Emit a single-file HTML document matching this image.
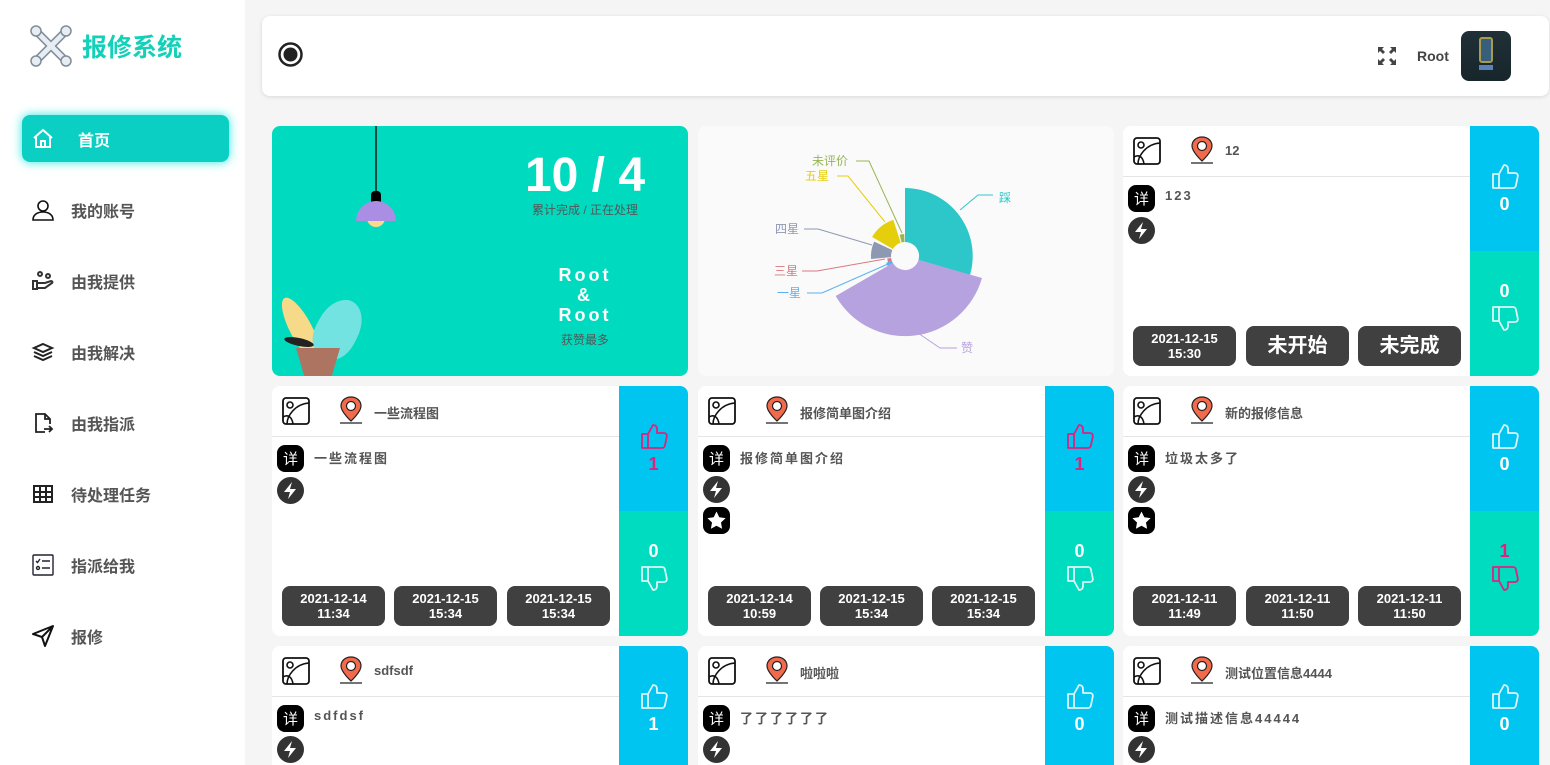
<!DOCTYPE html>
<html><head><meta charset="utf-8"><style>
*{margin:0;padding:0;box-sizing:border-box}
html{width:1550px;height:765px;overflow:hidden}
body{width:1550px;height:765px;overflow:hidden;background:#f5f5f5;font-family:"Liberation Sans","Noto Sans CJK SC",sans-serif;position:relative}
.side{position:absolute;left:0;top:0;width:245px;height:765px;background:#fff}
.logo{position:absolute;left:30px;top:25px;display:flex;align-items:center}
.logo span{font-size:25px;font-weight:bold;color:#13d1b8;margin-left:10px}
.nav{position:absolute;left:22px;width:207px;height:47px;display:flex;align-items:center;font-size:16px;font-weight:bold;color:#555}
.nav svg{position:absolute;left:9px}
.nav span{position:absolute;left:49px}
.nav.act{background:#0ccfc3;border-radius:8px;box-shadow:0 0 10px #2ee8e0;color:#fff}
.nav.act span{left:56px}
.head{position:absolute;left:262px;top:16px;width:1287px;height:80px;background:#fff;border-radius:8px;box-shadow:0 1px 4px rgba(0,0,0,.12)}
.card{position:absolute;width:416px;height:250px;background:#fff;border-radius:8px;overflow:hidden}
.card.r3{height:119px;border-radius:8px 8px 0 0}
.card .hd{position:absolute;left:0;top:0;width:347px;height:51px;border-bottom:1px solid #e5e5e5}
.card .img{position:absolute;left:10px;top:11px}
.card .pin{position:absolute;left:67px;top:10px}
.card .ttl{position:absolute;left:102px;top:17px;font-size:13px;font-weight:bold;color:#555}
.b{position:absolute;left:5px;width:27px;height:27px}
.desc{position:absolute;left:42px;top:62px;font-size:13px;font-weight:bold;color:#555;letter-spacing:2px}
.btn{position:absolute;top:200px;width:103px;height:40px;background:#404040;border-radius:8px;color:#fff;font-size:13px;font-weight:bold;text-align:center;line-height:15px;padding-top:5px}
.btn.big{font-size:20px;line-height:30px}
.up{position:absolute;left:347px;top:0;width:69px;height:125px;background:#00c5f0}
.dn{position:absolute;left:347px;top:125px;width:69px;height:125px;background:#00dcc0}
.num{position:absolute;left:0;width:69px;text-align:center;font-size:18px;font-weight:bold;color:#fff}
.up svg{position:absolute;left:20px;top:35px}
.up .num{top:68px}
.dn .num{top:30px}
.dn svg{position:absolute;left:20px;top:53px}
.pk{color:#e0217e!important}
</style></head><body>
<div class="side">
 <div class="logo">
  <svg width="42" height="42" viewBox="0 0 42 42" fill="none" stroke-linecap="round"><g stroke="#7f8c99" stroke-width="8"><path d="M8 8l26 26M34 8L8 34"/></g><g stroke="#e8edf3" stroke-width="5"><path d="M8 8l26 26M34 8L8 34"/></g><g fill="#e8edf3" stroke="#7f8c99" stroke-width="1.5"><circle cx="6" cy="6" r="5"/><circle cx="36" cy="6" r="5"/><circle cx="6" cy="36" r="5"/><circle cx="36" cy="36" r="5"/></g></svg>
  <span>报修系统</span>
 </div>
 <div class="nav act" style="top:115px"><svg width="24" height="24" viewBox="0 0 24 24" fill="none" stroke="#fff" stroke-width="2"><path d="M3 11L12 3l9 8M5 9v11h14V9M10 20v-6h4v6"/></svg><span>首页</span></div>
 <div class="nav" style="top:186px"><svg width="24" height="24" viewBox="0 0 24 24" fill="none" stroke="#111" stroke-width="1.6"><circle cx="12" cy="8" r="5"/><path d="M2 22c0-5 4-8 10-8s10 3 10 8z"/></svg><span>我的账号</span></div>
 <div class="nav" style="top:257px"><svg width="24" height="24" viewBox="0 0 24 24" fill="none" stroke="#333" stroke-width="2"><circle cx="9" cy="5" r="2"/><circle cx="17" cy="7" r="2"/><path d="M2 12h4v8H2zM6 14h8l6-2c1 0 2 1 1 2l-7 5H6"/></svg><span>由我提供</span></div>
 <div class="nav" style="top:328px"><svg width="24" height="24" viewBox="0 0 24 24" fill="none" stroke="#222" stroke-width="2"><path d="M12 4l9 4-9 4-9-4zM3 12l9 4 9-4M3 16l9 4 9-4"/></svg><span>由我解决</span></div>
 <div class="nav" style="top:399px"><svg width="24" height="24" viewBox="0 0 24 24" fill="none" stroke="#222" stroke-width="1.8"><path d="M14 21H5V3h9l5 5v5M14 3v5h5M13 18h8M18 15l3 3-3 3"/></svg><span>由我指派</span></div>
 <div class="nav" style="top:470px"><svg width="24" height="24" viewBox="0 0 24 24" fill="none" stroke="#222" stroke-width="2"><rect x="3" y="4" width="18" height="16"/><path d="M9 4v16M15 4v16M3 10h18M3 15h18"/></svg><span>待处理任务</span></div>
 <div class="nav" style="top:541px"><svg width="24" height="24" viewBox="0 0 24 24" fill="none" stroke="#223" stroke-width="1.4"><rect x="2" y="2" width="20" height="20" rx="1"/><path d="M5 8l1.5 1.5L9 6M11 8h8M11 15h8"/><circle cx="7" cy="15" r="1.5"/></svg><span>指派给我</span></div>
 <div class="nav" style="top:612px"><svg width="24" height="24" viewBox="0 0 24 24" fill="none" stroke="#111" stroke-width="2" stroke-linejoin="round"><path d="M22 2L2 10l9 3 3 9z M11 13l11-11"/></svg><span>报修</span></div>
</div>

<div class="head">
 <svg style="position:absolute;left:16px;top:26px" width="25" height="25" viewBox="0 0 25 25"><circle cx="12.5" cy="12.5" r="11" fill="none" stroke="#222" stroke-width="2.5"/><circle cx="12.5" cy="12.5" r="7" fill="#222"/></svg>
 <svg style="position:absolute;left:1116px;top:31px" width="18" height="18" viewBox="0 0 18 18" fill="#444"><path d="M0 0h6L4 2l3 3-2 2-3-3-2 2zM18 0v6l-2-2-3 3-2-2 3-3-2-2zM0 18v-6l2 2 3-3 2 2-3 3 2 2zM18 18h-6l2-2-3-3 2-2 3 3 2-2z"/></svg>
 <div style="position:absolute;left:1155px;top:32px;font-size:14px;font-weight:bold;color:#444">Root</div>
 <div style="position:absolute;left:1199px;top:15px;width:50px;height:50px;border-radius:8px;background:linear-gradient(180deg,#203036,#16262b);overflow:hidden"><div style="position:absolute;left:18px;top:6px;width:14px;height:26px;border:2px solid #a89a4e;border-radius:3px;background:#385f7a"></div><div style="position:absolute;left:18px;top:34px;width:14px;height:5px;background:#5a82b8"></div></div>
</div>

<div class="card" style="left:272px;top:126px;background:#00dbbf">
 <div style="position:absolute;left:103px;top:0;width:2px;height:66px;background:#1a4a40"></div>
 <div style="position:absolute;left:99px;top:65px;width:10px;height:12px;background:#000;border-radius:4px 4px 0 0"></div>
 <div style="position:absolute;left:95px;top:92px;width:18px;height:9px;background:#f9d88a;border-radius:0 0 9px 9px"></div>
 <div style="position:absolute;left:84px;top:75px;width:40px;height:20px;background:#a98ee4;border-radius:20px 20px 0 0"></div>
 <div style="position:absolute;left:18px;top:168px;width:22px;height:70px;background:#f7d98a;border-radius:50%;transform:rotate(-28deg)"></div>
 <div style="position:absolute;left:45px;top:172px;width:42px;height:62px;background:#72e3e0;border-radius:50% 50% 40% 40%;transform:rotate(28deg)"></div>
 <div style="position:absolute;left:12px;top:212px;width:30px;height:8px;background:#222;border-radius:50%;transform:rotate(12deg)"></div>
 <div style="position:absolute;left:24px;top:222px;width:44px;height:30px;background:#ad7462;clip-path:polygon(0 0,100% 0,80% 100%,20% 100%)"></div>
 <div style="position:absolute;left:230px;top:22px;width:166px;text-align:center;color:#fff;font-size:48px;font-weight:bold">10 / 4</div>
 <div style="position:absolute;left:230px;top:75px;width:166px;text-align:center;color:#555;font-size:12px">累计完成 / 正在处理</div>
 <div style="position:absolute;left:230px;top:139px;width:166px;text-align:center;color:#fff;font-size:18px;font-weight:bold;letter-spacing:3px;line-height:20px">Root<br>&amp;<br>Root</div>
 <div style="position:absolute;left:230px;top:205px;width:166px;text-align:center;color:#555;font-size:12px">获赞最多</div>
</div>

<div class="card" style="left:698px;top:126px;background:#fafafa">
<svg width="416" height="250" viewBox="698 126 416 250" style="position:absolute;left:0;top:0" font-family="Liberation Sans,Noto Sans CJK SC,sans-serif" font-size="12">
 <path d="M905,188 A68,68 0 0 1 970,275 L918.5,260 A14,14 0 0 0 905,242 Z" fill="#2ec7c9"/>
 <path d="M982,278 A80,80 0 0 1 835.7,296 L892.9,263 A14,14 0 0 0 918.5,260 Z" fill="#b6a2de"/>
 <path d="M892.9,263 L887.7,266 A20,20 0 0 1 886.2,262.8 L891.8,260.8 Z" fill="#5ab1ef"/>
 <path d="M891.8,260.8 L888.1,262.2 A18,18 0 0 1 887.2,258.5 L891.1,258 Z" fill="#d87a80"/>
 <path d="M871.1,259 A34,34 0 0 1 874.2,241.6 L892.3,250.1 A14,14 0 0 0 891.1,257.2 Z" fill="#8d98b3"/>
 <path d="M872.1,237 A38,38 0 0 1 893.3,219.9 L900.7,242.7 A14,14 0 0 0 892.9,249 Z" fill="#e5cf0d"/>
 <path d="M899.7,234.7 A22,22 0 0 1 904.2,234 L904.5,242 A14,14 0 0 0 901.6,242.4 Z" fill="#97b552"/>
 <g fill="none" stroke-width="1">
  <polyline points="960,210 978,195 993,195" stroke="#2ec7c9"/>
  <polyline points="915,331 940,348 957,348" stroke="#b6a2de"/>
  <polyline points="888,264 822,293 807,293" stroke="#5ab1ef"/>
  <polyline points="885,259 817,271 802,271" stroke="#d87a80"/>
  <polyline points="872,245 818,229 804,229" stroke="#8d98b3"/>
  <polyline points="885,222 848,176 837,176" stroke="#e5cf0d"/>
  <polyline points="902,233 869,161 856,161" stroke="#97b552"/>
 </g>
 <text x="999" y="202" fill="#2ec7c9">踩</text>
 <text x="961" y="352" fill="#b6a2de">赞</text>
 <text x="777" y="297" fill="#5ab1ef">一星</text>
 <text x="774" y="275" fill="#d87a80">三星</text>
 <text x="775" y="233" fill="#8d98b3">四星</text>
 <text x="805" y="180" fill="#e5cf0d">五星</text>
 <text x="812" y="165" fill="#97b552">未评价</text>
</svg>
</div>

<svg width="0" height="0" style="position:absolute">
 <defs>
  <symbol id="img" viewBox="0 0 28 28"><rect x="1" y="1" width="26" height="26" rx="3" fill="none" stroke="#111" stroke-width="1.8"/><circle cx="8" cy="8" r="3" fill="none" stroke="#111" stroke-width="1.6"/><path d="M1 20c5-3 9 0 10 7M5 27c0-8 8-20 22-21" fill="none" stroke="#111" stroke-width="1.6"/></symbol>
  <symbol id="pin" viewBox="0 0 24 28"><path d="M12 1C6 1 2 5 2 10c0 6 10 15 10 15s10-9 10-15C22 5 18 1 12 1z" fill="#f26a4b" stroke="#222" stroke-width="1.2"/><circle cx="12" cy="10" r="4.5" fill="#fff" stroke="#222" stroke-width="1.2"/><path d="M1 27h22" stroke="#222" stroke-width="1.2"/></symbol>
  <symbol id="xiang" viewBox="0 0 27 27"><rect width="27" height="27" rx="8" fill="#000"/><text x="13.5" y="19" text-anchor="middle" fill="#fff" font-size="15" font-family="Noto Sans CJK SC,sans-serif">详</text></symbol>
  <symbol id="bolt" viewBox="0 0 27 27"><circle cx="13.5" cy="13.5" r="13.5" fill="#333"/><path d="M15 5L7 15h6l-2 7 8-10h-6z" fill="#fff"/></symbol>
  <symbol id="star" viewBox="0 0 27 27"><rect width="27" height="27" rx="8" fill="#000"/><path d="M13.5 4.5l2.8 5.8 6.3.8-4.6 4.4 1.1 6.3-5.6-3-5.6 3 1.1-6.3-4.6-4.4 6.3-.8z" fill="#fff"/></symbol>
  <symbol id="tup" viewBox="0 0 30 30"><path d="M9 13v14H3V13zM9 13l5-9c2.5 0 4 1.5 4 4v4h7c2 0 3.2 1.6 2.8 3.4l-2 9.5C25.5 26 24.3 27 23 27H9" fill="none" stroke="currentColor" stroke-width="1.8" stroke-linejoin="round"/></symbol>
  <symbol id="tdn" viewBox="0 0 30 30"><path d="M9 17V3H3v14zM9 17l5 9c2.5 0 4-1.5 4-4v-4h7c2 0 3.2-1.6 2.8-3.4l-2-9.5C25.5 4 24.3 3 23 3H9" fill="none" stroke="currentColor" stroke-width="1.8" stroke-linejoin="round"/></symbol>
 </defs>
</svg>

<div class="card" style="left:1123px;top:126px">
 <div class="hd"><svg class="img" width="28" height="28"><use href="#img"/></svg><svg class="pin" width="24" height="28"><use href="#pin"/></svg><div class="ttl">12</div></div>
 <svg class="b" style="top:59px"><use href="#xiang"/></svg><svg class="b" style="top:91px"><use href="#bolt"/></svg>
 <div class="desc">123</div>
 <div class="btn" style="left:10px">2021-12-15<br>15:30</div>
 <div class="btn big" style="left:123px">未开始</div>
 <div class="btn big" style="left:235px">未完成</div>
 <div class="up"><svg width="30" height="30" style="color:#e0f4f8"><use href="#tup"/></svg><div class="num">0</div></div>
 <div class="dn"><div class="num">0</div><svg width="30" height="30" style="color:#e0f4f4"><use href="#tdn"/></svg></div>
</div>

<div class="card" style="left:272px;top:386px">
 <div class="hd"><svg class="img" width="28" height="28"><use href="#img"/></svg><svg class="pin" width="24" height="28"><use href="#pin"/></svg><div class="ttl">一些流程图</div></div>
 <svg class="b" style="top:59px"><use href="#xiang"/></svg><svg class="b" style="top:91px"><use href="#bolt"/></svg>
 <div class="desc">一些流程图</div>
 <div class="btn" style="left:10px">2021-12-14<br>11:34</div>
 <div class="btn" style="left:122px">2021-12-15<br>15:34</div>
 <div class="btn" style="left:235px">2021-12-15<br>15:34</div>
 <div class="up"><svg width="30" height="30" style="color:#e0217e"><use href="#tup"/></svg><div class="num pk">1</div></div>
 <div class="dn"><div class="num">0</div><svg width="30" height="30" style="color:#e0f4f4"><use href="#tdn"/></svg></div>
</div>
<div class="card" style="left:698px;top:386px">
 <div class="hd"><svg class="img" width="28" height="28"><use href="#img"/></svg><svg class="pin" width="24" height="28"><use href="#pin"/></svg><div class="ttl">报修简单图介绍</div></div>
 <svg class="b" style="top:59px"><use href="#xiang"/></svg><svg class="b" style="top:90px"><use href="#bolt"/></svg><svg class="b" style="top:121px"><use href="#star"/></svg>
 <div class="desc">报修简单图介绍</div>
 <div class="btn" style="left:10px">2021-12-14<br>10:59</div>
 <div class="btn" style="left:122px">2021-12-15<br>15:34</div>
 <div class="btn" style="left:234px">2021-12-15<br>15:34</div>
 <div class="up"><svg width="30" height="30" style="color:#e0217e"><use href="#tup"/></svg><div class="num pk">1</div></div>
 <div class="dn"><div class="num">0</div><svg width="30" height="30" style="color:#e0f4f4"><use href="#tdn"/></svg></div>
</div>
<div class="card" style="left:1123px;top:386px">
 <div class="hd"><svg class="img" width="28" height="28"><use href="#img"/></svg><svg class="pin" width="24" height="28"><use href="#pin"/></svg><div class="ttl">新的报修信息</div></div>
 <svg class="b" style="top:59px"><use href="#xiang"/></svg><svg class="b" style="top:90px"><use href="#bolt"/></svg><svg class="b" style="top:121px"><use href="#star"/></svg>
 <div class="desc">垃圾太多了</div>
 <div class="btn" style="left:10px">2021-12-11<br>11:49</div>
 <div class="btn" style="left:123px">2021-12-11<br>11:50</div>
 <div class="btn" style="left:235px">2021-12-11<br>11:50</div>
 <div class="up"><svg width="30" height="30" style="color:#e0f4f8"><use href="#tup"/></svg><div class="num">0</div></div>
 <div class="dn"><div class="num pk">1</div><svg width="30" height="30" style="color:#e0217e"><use href="#tdn"/></svg></div>
</div>

<div class="card r3" style="left:272px;top:646px">
 <div class="hd"><svg class="img" width="28" height="28"><use href="#img"/></svg><svg class="pin" width="24" height="28"><use href="#pin"/></svg><div class="ttl">sdfsdf</div></div>
 <svg class="b" style="top:59px"><use href="#xiang"/></svg><svg class="b" style="top:90px"><use href="#bolt"/></svg>
 <div class="desc">sdfdsf</div>
 <div class="up"><svg width="30" height="30" style="color:#e0f4f8"><use href="#tup"/></svg><div class="num">1</div></div>
</div>
<div class="card r3" style="left:698px;top:646px">
 <div class="hd"><svg class="img" width="28" height="28"><use href="#img"/></svg><svg class="pin" width="24" height="28"><use href="#pin"/></svg><div class="ttl">啦啦啦</div></div>
 <svg class="b" style="top:59px"><use href="#xiang"/></svg><svg class="b" style="top:90px"><use href="#bolt"/></svg>
 <div class="desc">了了了了了了</div>
 <div class="up"><svg width="30" height="30" style="color:#e0f4f8"><use href="#tup"/></svg><div class="num">0</div></div>
</div>
<div class="card r3" style="left:1123px;top:646px">
 <div class="hd"><svg class="img" width="28" height="28"><use href="#img"/></svg><svg class="pin" width="24" height="28"><use href="#pin"/></svg><div class="ttl">测试位置信息4444</div></div>
 <svg class="b" style="top:59px"><use href="#xiang"/></svg><svg class="b" style="top:90px"><use href="#bolt"/></svg>
 <div class="desc">测试描述信息44444</div>
 <div class="up"><svg width="30" height="30" style="color:#e0f4f8"><use href="#tup"/></svg><div class="num">0</div></div>
</div>
</body></html>
